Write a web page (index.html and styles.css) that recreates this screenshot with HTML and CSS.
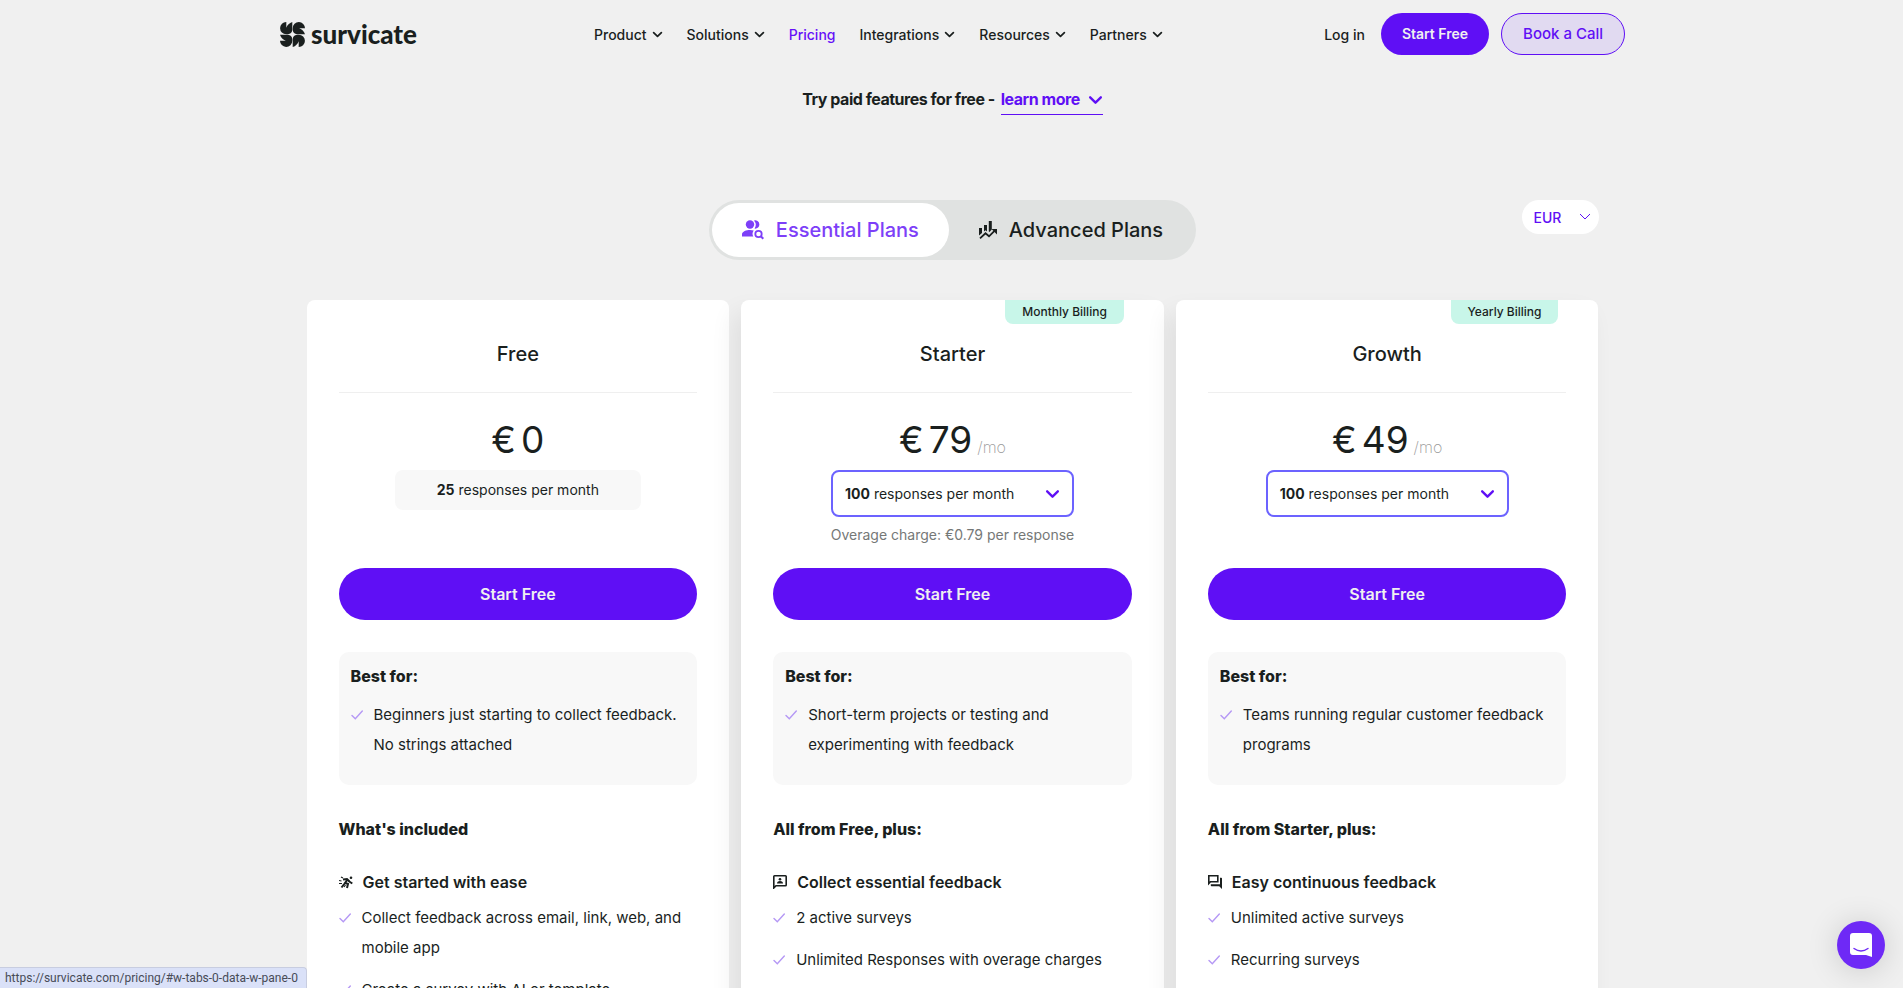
FILE: index.html
```html
<!DOCTYPE html>
<html lang="en">
  <head>
    <meta charset="utf-8">
    <title>Pricing | Survicate</title>
    <link rel="stylesheet" href="styles.css">
  </head>
  <body>
    <svg width="0" height="0" class="sprite">
      <symbol id="chevron" viewBox="0 0 14 9"><path d="M2 2l5 5 5-5" fill="none" stroke="currentColor" stroke-width="2.2" stroke-linecap="round" stroke-linejoin="round"/></symbol>
      <symbol id="check" viewBox="0 0 12 12"><path d="M1 6.500l3.300 3.300L11.300 2" fill="none" stroke="#b598f5" stroke-width="1.400" stroke-linecap="round"/></symbol>
    </svg>

    <header class="header">
      <a class="logo" href="#">
        <svg width="25" height="25" viewBox="0 0 25 25" fill="#1a1f1e">
          <path id="petal" d="M6.300 0V5.800Q7.800 1.500 12.300 0V8Q11.800 11.800 8 12.300H6.200A6.150 6.150 0 0 1 6.300 0z"/>
          <use href="#petal" transform="rotate(90 12.500 12.500)"/>
          <use href="#petal" transform="rotate(180 12.500 12.500)"/>
          <use href="#petal" transform="rotate(270 12.500 12.500)"/>
        </svg>
        <span>survicate</span>
      </a>
      <nav class="nav">
        <a href="#">Product <svg><use href="#chevron"/></svg></a>
        <a href="#">Solutions <svg><use href="#chevron"/></svg></a>
        <a href="#" class="current">Pricing</a>
        <a href="#">Integrations <svg><use href="#chevron"/></svg></a>
        <a href="#">Resources <svg><use href="#chevron"/></svg></a>
        <a href="#">Partners <svg><use href="#chevron"/></svg></a>
      </nav>
      <div class="account">
        <a href="#" class="login">Log in</a>
        <a href="#" class="btn-small">Start Free</a>
        <a href="#" class="btn-small outline">Book a Call</a>
      </div>
    </header>

    <main class="pricing">
      <p class="trial">Try paid features for free - <a href="#">learn more <svg><use href="#chevron"/></svg></a></p>

      <div class="controls">
        <div class="tabs">
          <button class="tab active">
            <svg width="22" height="20" viewBox="0 0 22 20" fill="currentColor">
              <circle cx="8" cy="4.500" r="4.200"/>
              <path d="M12 .4a4.200 4.200 0 1 1 .6 8.200 7 7 0 0 0-.6-8.200z"/>
              <path d="M0 16.500v-2.300C0 11.500 4.500 10 8 10c1.300 0 2.600.2 3.700.5a5.500 5.500 0 0 0-.4 6z"/>
              <circle cx="16.500" cy="14" r="3.200" fill="none" stroke="currentColor" stroke-width="1.800"/>
              <path d="M18.800 16.300l2.500 2.500" stroke="currentColor" stroke-width="2"/>
            </svg>
            Essential Plans
          </button>
          <button class="tab">
            <svg width="18" height="18" viewBox="0 0 18 18" fill="currentColor">
              <path d="M0 7h3v5L0 14.500zM5 4h3v6.500L6.500 9.300 5 10.500zM9.800 0h3v8.500L10.500 11l-.7-.6z"/>
              <path d="M1 17.300l5.500-5 3.500 3 6-6" fill="none" stroke="currentColor" stroke-width="1.800"/>
              <path d="M12.500 8H18v5.500z"/>
            </svg>
            Advanced Plans
          </button>
        </div>
        <div class="currency">
          <select aria-label="Currency">
            <option>EUR</option>
            <option>USD</option>
          </select>
          <svg viewBox="0 0 12 8"><path d="M1 1l5 5 5-5" fill="none" stroke="currentColor"/></svg>
        </div>
      </div>

      <div class="plans">
        <section class="plan">
          <h2>Free</h2>
          <div class="price"><span>€</span><span>0</span></div>
          <div class="volume-area">
            <p class="volume-fixed"><b>25</b> responses per month</p>
          </div>
          <a href="#" class="btn">Start Free</a>
          <div class="best">
            <h3>Best for:</h3>
            <ul>
              <li><svg><use href="#check"/></svg>Beginners just starting to collect feedback. No strings attached</li>
            </ul>
          </div>
          <h3 class="included">What's included</h3>
          <h4>
            <svg viewBox="0 0 14 14" fill="#1a1f1e" stroke="#1a1f1e">
              <circle cx="12" cy="2.800" r="1.300" stroke="none"/>
              <path d="M4 4.500l4-.5 2.500 2.500M8.500 4.500L6 8l3 1-1 4M6 8L2.500 12.500M9.500 6l3.800 2.500" fill="none" stroke-width="2"/>
              <path d="M0 5.500l2.500.5M2 2l2 1M0 8.500h3M5 12l1.500-2" fill="none" stroke-width="1.200"/>
            </svg>
            Get started with ease
          </h4>
          <ul>
            <li><svg><use href="#check"/></svg>Collect feedback across email, link, web, and mobile app</li>
            <li><svg><use href="#check"/></svg>Create a survey with AI or template</li>
          </ul>
        </section>

        <section class="plan raised">
          <span class="badge">Monthly Billing</span>
          <h2>Starter</h2>
          <div class="price"><span>€</span><span>79</span><small>/mo</small></div>
          <div class="volume-area">
            <div class="volume">
              <label for="starter-volume">100</label>
              <select id="starter-volume"><option>responses per month</option></select>
              <svg><use href="#chevron"/></svg>
            </div>
            <p class="overage">Overage charge: €0.79 per response</p>
          </div>
          <a href="#" class="btn">Start Free</a>
          <div class="best">
            <h3>Best for:</h3>
            <ul>
              <li><svg><use href="#check"/></svg>Short-term projects or testing and experimenting with feedback</li>
            </ul>
          </div>
          <h3 class="included">All from Free, plus:</h3>
          <h4>
            <svg viewBox="0 0 14 14" fill="#1a1f1e">
              <path d="M.8 13V1.500q0-.7.7-.7h11q.7 0 .7.700v8.500q0 .7-.7.700H3z" fill="none" stroke="#1a1f1e" stroke-width="1.600"/>
              <circle cx="7" cy="4.200" r="1.300"/>
              <path d="M4 8.500Q4 6 7 6t3 2.500z"/>
            </svg>
            Collect essential feedback
          </h4>
          <ul>
            <li><svg><use href="#check"/></svg>2 active surveys</li>
            <li><svg><use href="#check"/></svg>Unlimited Responses with overage charges</li>
          </ul>
        </section>

        <section class="plan raised">
          <span class="badge">Yearly Billing</span>
          <h2>Growth</h2>
          <div class="price"><span>€</span><span>49</span><small>/mo</small></div>
          <div class="volume-area">
            <div class="volume">
              <label for="growth-volume">100</label>
              <select id="growth-volume"><option>responses per month</option></select>
              <svg><use href="#chevron"/></svg>
            </div>
          </div>
          <a href="#" class="btn">Start Free</a>
          <div class="best">
            <h3>Best for:</h3>
            <ul>
              <li><svg><use href="#check"/></svg>Teams running regular customer feedback programs</li>
            </ul>
          </div>
          <h3 class="included">All from Starter, plus:</h3>
          <h4>
            <svg viewBox="0 0 14 14" fill="#1a1f1e">
              <path d="M.8 8.500V.8h9v6H2.500z" fill="none" stroke="#1a1f1e" stroke-width="1.600"/>
              <path d="M12 2.800h1.300q.7 0 .7.700V14l-2.800-2.800H3.500q-.7 0-.7-.7V9.300H12z"/>
            </svg>
            Easy continuous feedback
          </h4>
          <ul>
            <li><svg><use href="#check"/></svg>Unlimited active surveys</li>
            <li><svg><use href="#check"/></svg>Recurring surveys</li>
          </ul>
        </section>
      </div>
    </main>

    <button class="chat" aria-label="Open chat">
      <svg width="22" height="24" viewBox="0 0 22 24">
        <path d="M3 0h16q3 0 3 3v21l-6-2H3q-3 0-3-3V3q0-3 3-3z" fill="#fff"/>
        <path d="M4 15.500q7 5 14 0" fill="none" stroke="#6e29f6" stroke-width="1.400" stroke-linecap="round"/>
      </svg>
    </button>
    <div class="link-status">https://survicate.com/pricing/#w-tabs-0-data-w-pane-0</div>
  </body>
</html>
```
FILE: styles.css
```css
* {
  box-sizing: border-box;
}

body {
  margin: 0;
  padding-left: 2px;
  height: 100vh;
  overflow: hidden;
  background: #f0f0f0;
  color: #1a1f1e;
  font-family: Inter, "Liberation Sans", sans-serif;
  font-size: 15px;
}

a {
  color: inherit;
  text-decoration: none;
}

h2, h3, h4, p, ul {
  margin: 0;
  padding: 0;
}

button, select {
  font: inherit;
  color: inherit;
  border: 0;
  background: none;
  padding: 0;
  cursor: pointer;
}

select {
  appearance: none;
  outline: none;
}

.sprite {
  position: absolute;
}

/* header */
.header {
  display: flex;
  align-items: center;
  max-width: 1345px;
  margin: 0 auto;
  padding-top: 13px;
  font-size: 14px;
  font-weight: 500;
}

.logo {
  display: flex;
  align-items: center;
  gap: 6px;
  font-family: Lato, sans-serif;
  font-size: 26px;
  font-weight: 900;
  line-height: 26px;
}

.nav {
  display: flex;
  gap: 24px;
  margin-left: 177px;
}

.nav a {
  display: flex;
  align-items: center;
  gap: 5px;
}

.nav svg {
  width: 11px;
  height: 7px;
}

.nav .current {
  color: #6610f8;
}

.account {
  display: flex;
  align-items: center;
  gap: 12px;
  margin-left: auto;
}

.login {
  margin-right: 4px;
}

.btn-small {
  padding: 0 21px;
  border-radius: 21px;
  background: #5f0ff5;
  color: #f0f0f0;
  line-height: 42px;
  font-weight: 600;
}

.btn-small.outline {
  border: 1px solid #5f0ff5;
  background: #e1daf1;
  color: #5f0ff5;
  font-size: 15px;
  font-weight: 500;
  line-height: 40px;
}

/* pricing */
.pricing {
  max-width: 1292px;
  margin: 0 auto;
}

.trial {
  display: flex;
  justify-content: center;
  gap: 6px;
  margin-top: 30px;
  font-size: 16px;
  font-weight: 700;
  line-height: 29px;
  letter-spacing: -0.03em;
}

.trial a {
  display: flex;
  align-items: center;
  gap: 8px;
  border-bottom: 1px solid #5f0ff5;
  color: #5f0ff5;
}

.trial svg {
  width: 15px;
  height: 10px;
}

.controls {
  display: grid;
  grid-template-columns: 1fr auto 1fr;
  align-items: start;
  margin-top: 85px;
}

.tabs {
  grid-column: 2;
  display: flex;
  padding: 3px;
  border-radius: 30px;
  background: #e0e2e1;
}

.tab {
  display: flex;
  align-items: center;
  gap: 12px;
  height: 54px;
  padding: 0 30px;
  border-radius: 27px;
  font-size: 20px;
  font-weight: 500;
}

.tab.active {
  background: #fff;
  color: #7d3ff8;
}

.currency {
  display: flex;
  align-items: center;
  justify-self: end;
  position: relative;
  border-radius: 17px;
  background: #fff;
  color: #5f0ff5;
}

.currency select {
  width: 77px;
  height: 34px;
  padding-left: 12px;
  font-size: 14px;
  font-weight: 500;
}

.currency svg {
  position: absolute;
  right: 8px;
  width: 12px;
  height: 8px;
  pointer-events: none;
}

.plans {
  display: grid;
  grid-template-columns: repeat(3, 1fr);
  gap: 12px;
  margin-top: 40px;
}

.plan {
  position: relative;
  min-height: 900px;
  padding: 32px;
  border-radius: 8px;
  background: #fff;
}

.plan.raised {
  box-shadow: -8px 12px 24px rgba(0, 0, 0, 0.07);
}

.badge {
  position: absolute;
  top: 0;
  right: 40px;
  padding: 0 17px;
  border-radius: 0 0 8px 8px;
  background: #c8f6e9;
  font-size: 12px;
  font-weight: 500;
  line-height: 24px;
}

.plan h2 {
  padding: 6px 0 22px;
  border-bottom: 1px solid #efefef;
  font-size: 20px;
  font-weight: 500;
  line-height: 32px;
  text-align: center;
}

.price {
  display: flex;
  justify-content: center;
  align-items: baseline;
  gap: 5px;
  height: 46px;
  margin-top: 24px;
  font-size: 37px;
  line-height: 46px;
}

.price small {
  color: #999;
  font-size: 16px;
  font-weight: 200;
  line-height: 20px;
}

.volume-area {
  height: 98px;
  margin-top: 7px;
  font-size: 14px;
}

.volume-fixed {
  width: 246px;
  margin: 0 auto;
  border-radius: 8px;
  background: #f8f8f8;
  line-height: 40px;
  text-align: center;
}

.volume {
  display: flex;
  align-items: center;
  gap: 4px;
  width: 243px;
  height: 47px;
  margin: 0 auto;
  padding: 0 12px;
  border: 2px solid #6c63ff;
  border-radius: 8px;
}

.volume label {
  font-weight: 700;
}

.volume select {
  flex: 1;
}

.volume svg {
  width: 15px;
  height: 10px;
  color: #5f0ff5;
}

.overage {
  margin-top: 8px;
  color: #757877;
  line-height: 20px;
  text-align: center;
}

.btn {
  display: block;
  border-radius: 26px;
  background: #5f0ff5;
  color: #f0f0f0;
  font-size: 16px;
  font-weight: 600;
  line-height: 52px;
  text-align: center;
}

.best {
  height: 133px;
  margin-top: 32px;
  padding: 12px;
  border-radius: 10px;
  background: #f8f8f8;
}

.plan h3 {
  font-size: 16px;
  font-weight: 800;
  line-height: 24px;
}

.best h3 {
  margin-bottom: 12px;
}

.plan .included {
  margin: 32px 0 28px;
}

.plan h4 {
  display: flex;
  align-items: center;
  gap: 10px;
  margin-bottom: 8px;
  font-size: 16px;
  font-weight: 600;
  line-height: 26px;
}

.plan h4 svg {
  width: 14px;
  height: 14px;
}

.plan li {
  display: flex;
  gap: 11px;
  margin-bottom: 12px;
  font-size: 15px;
  line-height: 30px;
}

.plan li svg {
  flex: none;
  width: 12px;
  height: 12px;
  margin-top: 9px;
}

.chat {
  display: flex;
  justify-content: center;
  align-items: center;
  position: fixed;
  right: 18px;
  bottom: 19px;
  width: 48px;
  height: 48px;
  border-radius: 50%;
  background: #6e29f6;
  box-shadow: 0 2px 32px rgba(0, 0, 0, 0.16);
}

.link-status {
  position: fixed;
  left: 0;
  bottom: 0;
  padding: 0 8px 0 5px;
  border: 1px solid #c8cde0;
  border-width: 1px 1px 0 0;
  border-radius: 0 4px 0 0;
  background: #dae1f8;
  color: #474b57;
  font-family: Roboto, sans-serif;
  font-size: 12px;
  line-height: 20px;
}
```
